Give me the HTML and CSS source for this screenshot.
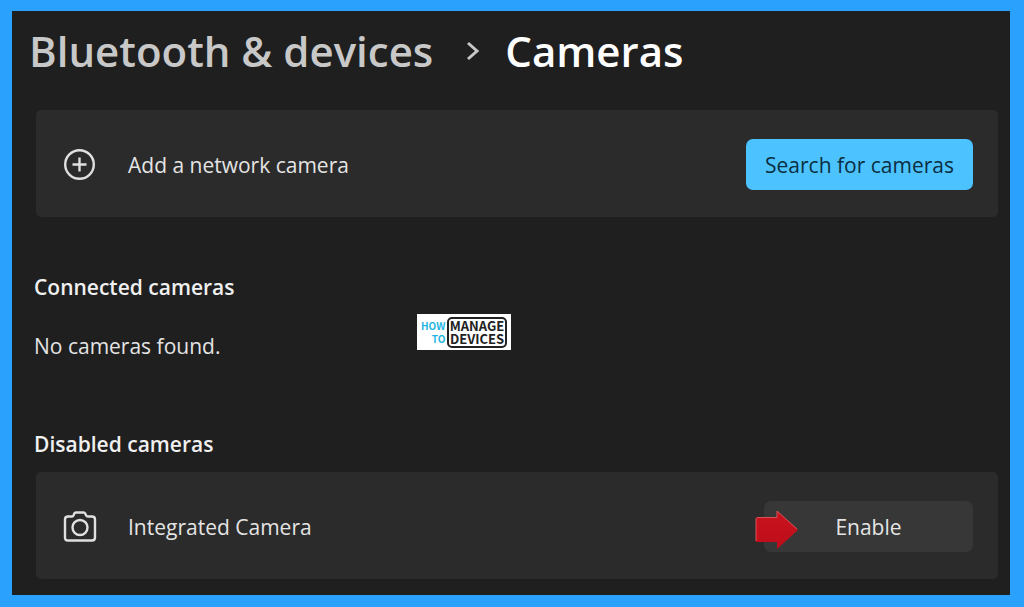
FILE: index.html
```html
<!DOCTYPE html>
<html lang="en">
<head>
  <meta charset="UTF-8">
  <meta name="viewport" content="width=device-width, initial-scale=1.0">
  <title>Bluetooth &amp; devices - Cameras</title>
  <link rel="stylesheet" href="styles.css">
</head>
<body>

  <main class="panel">
    <h1 class="breadcrumb">
      <a href="#">Bluetooth &amp; devices</a>
      <svg class="chevron" viewBox="0 0 14 20" aria-hidden="true">
        <path d="M2 2 L11 10 L2 18"/>
      </svg>
      <span>Cameras</span>
    </h1>

    <section class="card">
      <svg class="icon" viewBox="0 0 34 34" aria-hidden="true">
        <circle cx="16.500" cy="16.500" r="14.300"/>
        <path d="M16.500 9.500 V23.500 M9.500 16.500 H23.500"/>
      </svg>
      <span class="label">Add a network camera</span>
      <button type="button" class="primary">Search for cameras</button>
    </section>

    <section class="connected">
      <h2>Connected cameras</h2>
      <p>No cameras found.</p>
      <div class="logo">
        <div class="logo-how"><span>HOW</span><span>TO</span></div>
        <div class="logo-box"><span>MANAGE</span><span>DEVICES</span></div>
      </div>
    </section>

    <section class="disabled">
      <h2>Disabled cameras</h2>
      <div class="card">
        <svg class="icon" viewBox="0 0 34 34" aria-hidden="true">
          <path d="M4 6.500 H9 Q10 6.500 10.600 5.200 L11.300 3.500 Q11.700 2.500 13 2.500 H20.500 Q21.700 2.500 22.200 3.500 L23 5.200 Q23.600 6.500 25 6.500 H29 Q32 6.500 32 9.500 V27.500 Q32 30.500 29 30.500 H5 Q2 30.500 2 27.500 V9.500 Q2 6.500 5 6.500"/>
          <circle cx="17" cy="17.500" r="7.500"/>
        </svg>
        <span class="label">Integrated Camera</span>
        <div class="action">
          <button type="button" class="secondary">Enable</button>
          <svg class="arrow" viewBox="0 0 44 40" aria-hidden="true">
            <defs>
              <linearGradient id="red" x1="0" y1="0" x2="0" y2="1">
                <stop offset="0" stop-color="#c9131d"/>
                <stop offset="1" stop-color="#bd0d1a"/>
              </linearGradient>
            </defs>
            <path class="arrow-body" d="M1 8 H22 V1 L43 20 L22 39 V32 H1 Z"/>
            <path class="arrow-shine" d="M1 31 V9 Q1 7.500 3 7.500 H22 V1 L42 19"/>
          </svg>
        </div>
      </div>
    </section>
  </main>

</body>
</html>
```

FILE: styles.css
```css
* {
  box-sizing: border-box;
}
body {
  margin: 0;
  min-height: 100vh;
  display: flex;
  padding: 11px 14px 12px 12px;
  background-color: #2aa1fd;
  color: #e4e4e4;
  font-family: "Open Sans", "Noto Sans", sans-serif;
  font-size: 21px;
  line-height: 30px;
}
.panel {
  flex: 1;
  padding: 10px 12px 16px 24px;
  background-color: #1f1f1f;
}
h1, h2, p {
  margin: 0;
}

/* header */
.breadcrumb {
  display: flex;
  align-items: center;
  margin: 0 0 29px -7px;
  font-size: 42px;
  font-weight: 600;
  line-height: 60px;
  color: #fff;
}
.breadcrumb a {
  color: #c8c8c8;
  text-decoration: none;
}
.chevron {
  width: 14px;
  height: 20px;
  margin: 0 25px 0 33px;
  fill: none;
  stroke: #c8c8c8;
  stroke-width: 3;
}

/* cards */
.card {
  display: flex;
  align-items: center;
  padding: 29px 25px 27px 27px;
  border-radius: 5px;
  background-color: #2b2b2b;
}
.icon {
  width: 34px;
  height: 34px;
  fill: none;
  stroke: #e0e0e0;
  stroke-width: 2.4;
}
.label {
  flex: 1;
  margin-left: 31px;
}
button {
  display: block;
  height: 51px;
  border: none;
  border-radius: 7px;
  font: inherit;
}
.primary {
  width: 227px;
  padding: 0;
  background-color: #4cc2ff;
  color: #0a2e42;
}
.secondary {
  width: 209px;
  background-color: #373737;
  color: #e4e4e4;
}

/* camera lists */
h2 {
  font-size: 21px;
  font-weight: 600;
  line-height: 30px;
  color: #f0f0f0;
}
.connected {
  position: relative;
  margin: 55px 0 68px -2px;
}
.connected p {
  margin-top: 29px;
}
.disabled h2 {
  margin: 0 0 13px -2px;
}

/* watermark */
.logo {
  position: absolute;
  left: 383px;
  top: 42px;
  display: flex;
  align-items: center;
  justify-content: space-between;
  width: 94px;
  height: 36px;
  padding: 0 4px;
  background-color: #fff;
  font-family: "Noto Sans CJK SC", sans-serif;
  font-weight: bold;
  line-height: 13px;
}
.logo-how,
.logo-box {
  display: flex;
  flex-direction: column;
}
.logo-how {
  align-items: flex-end;
  font-size: 10px;
  color: #1fb6e3;
}
.logo-box {
  align-items: center;
  justify-content: center;
  width: 60px;
  height: 31px;
  border: 2px solid #222;
  border-radius: 5px;
  font-size: 13px;
  color: #222;
}

/* pointer over the Enable button */
.action {
  position: relative;
}
.arrow {
  position: absolute;
  left: -9px;
  top: 9px;
  width: 44px;
  height: 40px;
}
.arrow-body {
  fill: url(#red);
}
.arrow-shine {
  fill: none;
  stroke: #d9545a;
  stroke-width: 1;
}
```
